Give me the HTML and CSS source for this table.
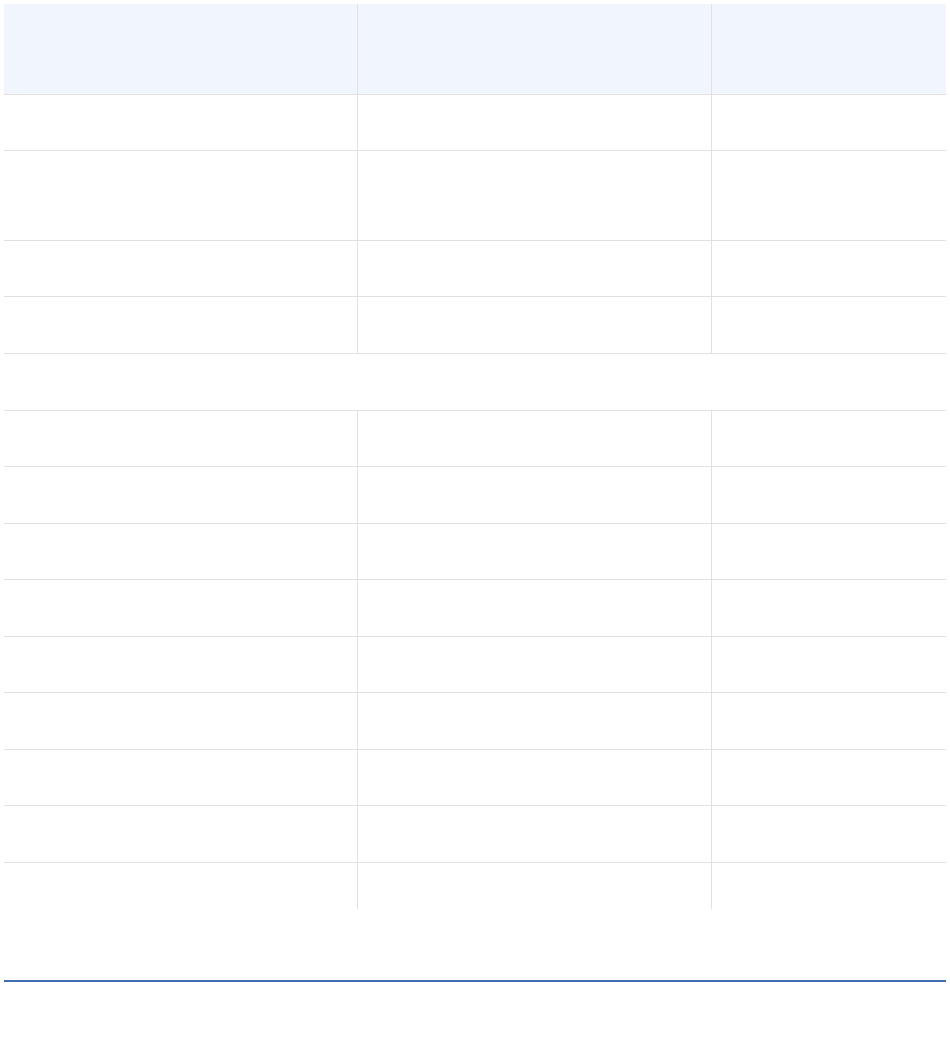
FILE: index.html
```html
<!DOCTYPE html>
<html lang="en">
<head>
    <meta charset="UTF-8">
    <meta name="viewport" content="width=device-width, initial-scale=1.0">
    <title>Table</title>
    <link rel="stylesheet" href="styles.css">
</head>
<body>
    <div id="page">
        <div class="grid">
            <div class="row head">
                <div class="cell"></div>
                <div class="cell"></div>
                <div class="cell"></div>
            </div>
            <div class="row">
                <div class="cell"></div>
                <div class="cell"></div>
                <div class="cell"></div>
            </div>
            <div class="row tall">
                <div class="cell"></div>
                <div class="cell"></div>
                <div class="cell"></div>
            </div>
            <div class="row">
                <div class="cell"></div>
                <div class="cell"></div>
                <div class="cell"></div>
            </div>
            <div class="row wide">
                <div class="cell"></div>
                <div class="cell"></div>
                <div class="cell"></div>
            </div>
            <!-- section row spans all columns -->
            <div class="row section wide">
                <div class="cell"></div>
            </div>
            <div class="row">
                <div class="cell"></div>
                <div class="cell"></div>
                <div class="cell"></div>
            </div>
            <div class="row wide">
                <div class="cell"></div>
                <div class="cell"></div>
                <div class="cell"></div>
            </div>
            <div class="row">
                <div class="cell"></div>
                <div class="cell"></div>
                <div class="cell"></div>
            </div>
            <div class="row wide">
                <div class="cell"></div>
                <div class="cell"></div>
                <div class="cell"></div>
            </div>
            <div class="row">
                <div class="cell"></div>
                <div class="cell"></div>
                <div class="cell"></div>
            </div>
            <div class="row wide">
                <div class="cell"></div>
                <div class="cell"></div>
                <div class="cell"></div>
            </div>
            <div class="row">
                <div class="cell"></div>
                <div class="cell"></div>
                <div class="cell"></div>
            </div>
            <div class="row wide">
                <div class="cell"></div>
                <div class="cell"></div>
                <div class="cell"></div>
            </div>
            <div class="row last">
                <div class="cell"></div>
                <div class="cell"></div>
                <div class="cell"></div>
            </div>
        </div>
        <div class="rule"></div>
    </div>
</body>
</html>
```

FILE: styles.css
```css
* {
    box-sizing: border-box;
}
body {
    margin: 0;
    font-family: "Liberation Sans", Arial, sans-serif;
    background-color: #fff;
}
#page {
    padding: 4px;
}
.grid {
    width: 942px;
}
.row {
    display: grid;
    grid-template-columns: 354px 354px 1fr;
    height: 56px;
    border-bottom: 1px solid #e3e1e0;
}
.row.wide {
    height: 57px;
}
.row .cell {
    border-right: 1px solid #e3e1e0;
}
.row .cell:last-child {
    border-right: none;
}
.head {
    height: 91px;
    background-color: #f1f6fe;
    border-bottom-color: #e6dfdf;
}
.tall {
    height: 90px;
}
.section {
    grid-template-columns: 1fr;
}
.last {
    height: 46px;
    border-bottom: none;
}
.rule {
    margin-top: 71px;
    width: 942px;
    height: 2px;
    background-color: #3f6dad;
}
```
